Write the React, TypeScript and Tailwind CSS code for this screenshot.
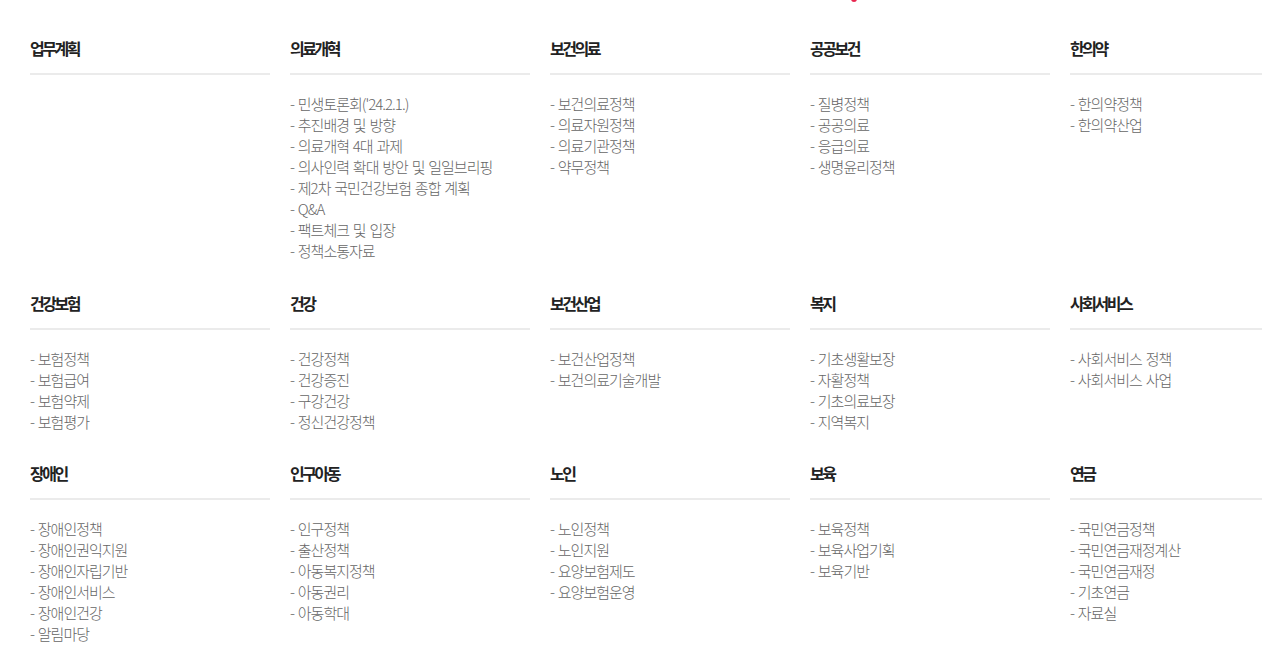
import React from "react";

type Section = { title: string; items: string[] };

const rows: Section[][] = [
  [
    { title: "업무계획", items: [] },
    {
      title: "의료개혁",
      items: [
        "민생토론회('24.2.1.)",
        "추진배경 및 방향",
        "의료개혁 4대 과제",
        "의사인력 확대 방안 및 일일브리핑",
        "제2차 국민건강보험 종합 계획",
        "Q&A",
        "팩트체크 및 입장",
        "정책소통자료",
      ],
    },
    { title: "보건의료", items: ["보건의료정책", "의료자원정책", "의료기관정책", "약무정책"] },
    { title: "공공보건", items: ["질병정책", "공공의료", "응급의료", "생명윤리정책"] },
    { title: "한의약", items: ["한의약정책", "한의약산업"] },
  ],
  [
    { title: "건강보험", items: ["보험정책", "보험급여", "보험약제", "보험평가"] },
    { title: "건강", items: ["건강정책", "건강증진", "구강건강", "정신건강정책"] },
    { title: "보건산업", items: ["보건산업정책", "보건의료기술개발"] },
    { title: "복지", items: ["기초생활보장", "자활정책", "기초의료보장", "지역복지"] },
    { title: "사회서비스", items: ["사회서비스 정책", "사회서비스 사업"] },
  ],
  [
    {
      title: "장애인",
      items: ["장애인정책", "장애인권익지원", "장애인자립기반", "장애인서비스", "장애인건강", "알림마당"],
    },
    { title: "인구아동", items: ["인구정책", "출산정책", "아동복지정책", "아동권리", "아동학대"] },
    { title: "노인", items: ["노인정책", "노인지원", "요양보험제도", "요양보험운영"] },
    { title: "보육", items: ["보육정책", "보육사업기획", "보육기반"] },
    { title: "연금", items: ["국민연금정책", "국민연금재정계산", "국민연금재정", "기초연금", "자료실"] },
  ],
];

const MenuColumn: React.FC<Section> = ({ title, items }) => (
  <div>
    <h3 className="pb-[15px] border-b-2 border-[#ebebeb] text-[16px] leading-5 font-bold tracking-[-2.5px] text-[#222]">
      {title}
    </h3>
    <ul className="mt-[18px]">
      {items.map((item) => (
        <li
          key={item}
          className="text-[15px] leading-[21px] font-light tracking-[-1px] [word-spacing:1.5px] text-[#666]"
        >
          - {item}
        </li>
      ))}
    </ul>
  </div>
);

export default function App() {
  return (
    <div
      className="relative w-full h-[661px] overflow-hidden bg-white"
      style={{ fontFamily: '"Noto Sans CJK KR", "Noto Sans", sans-serif' }}
    >
      {/* 상단 메뉴 활성 표시 */}
      <span className="absolute left-[851px] top-[-4px] w-[6px] h-[6px] rounded-full bg-[#e8264f]" />

      <div className="pt-[38px] pl-[30px] flex flex-col gap-y-[31.5px]">
        {rows.map((row, i) => (
          <div key={i} className="grid grid-cols-[repeat(5,240px)] gap-x-5 w-[1280px]">
            {row.map((sec) => (
              <MenuColumn key={sec.title} title={sec.title} items={sec.items} />
            ))}
          </div>
        ))}
      </div>
    </div>
  );
}
